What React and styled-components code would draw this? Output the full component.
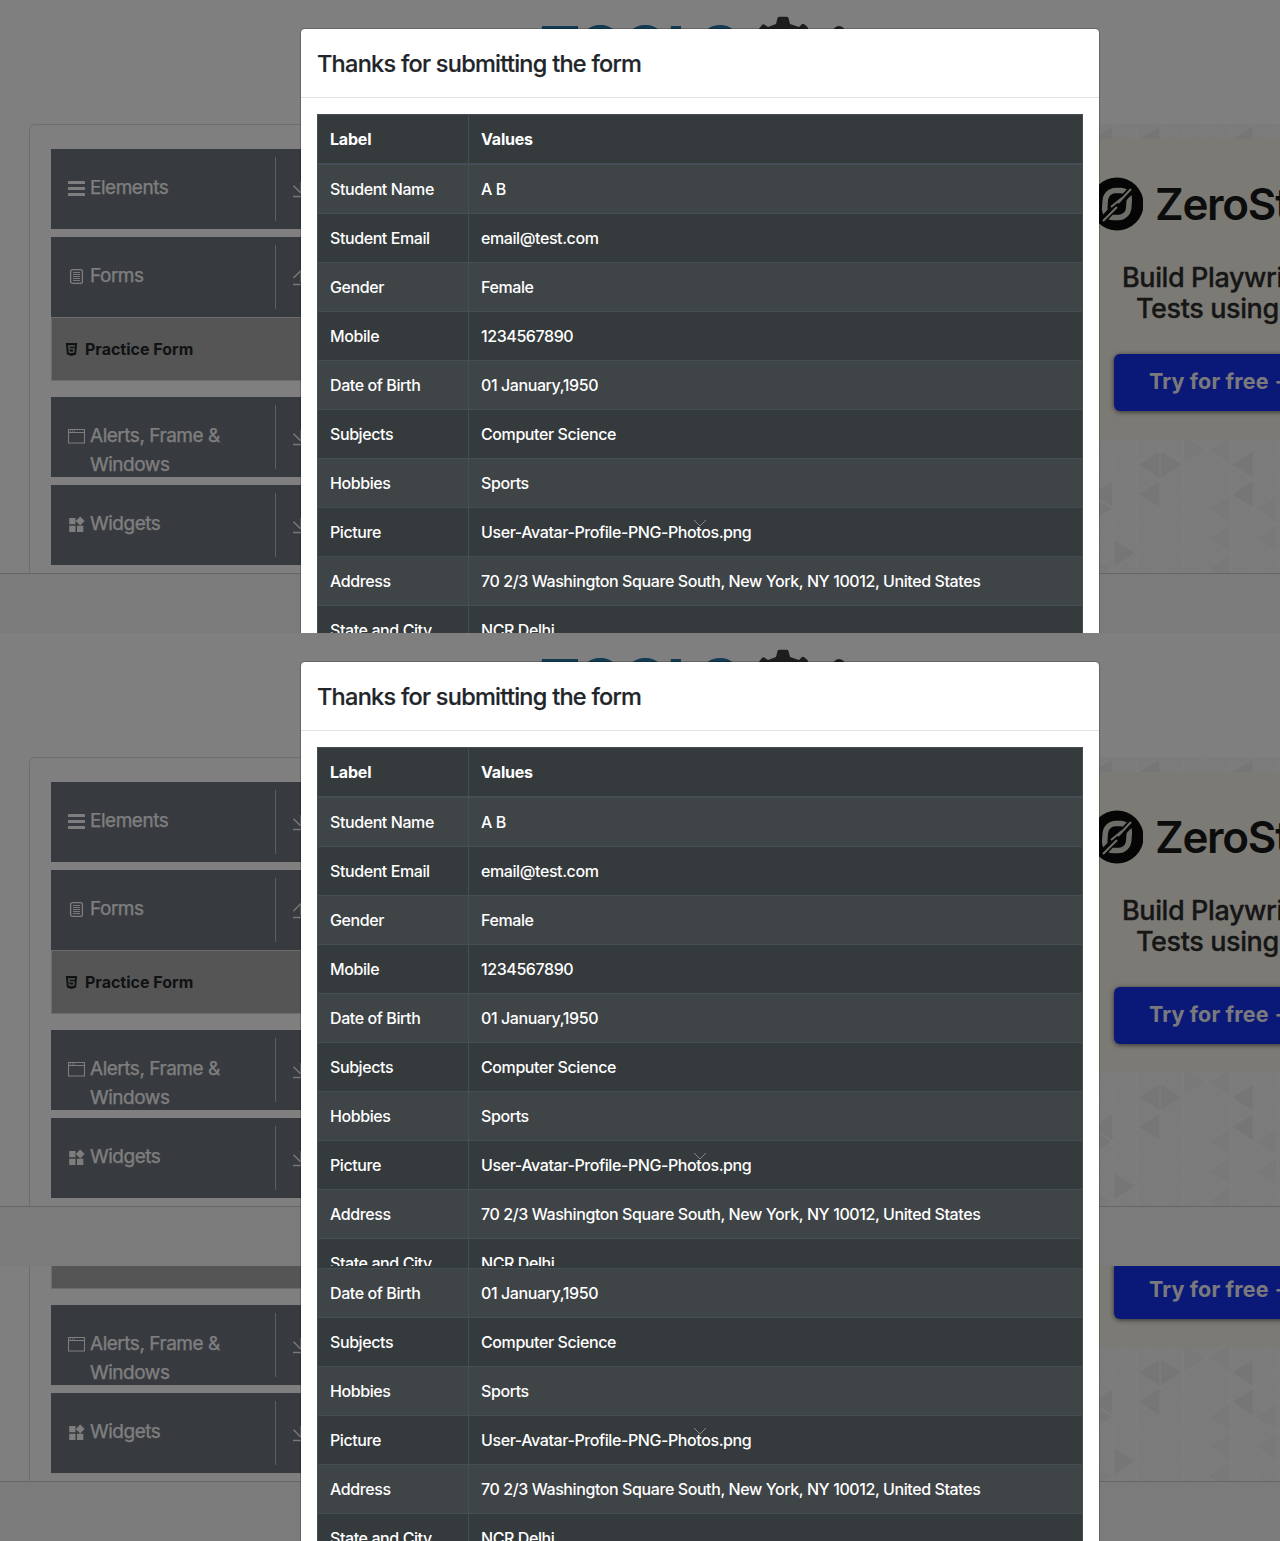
import React from "react";
import styled, { createGlobalStyle } from "styled-components";
import { FaHtml5 } from "react-icons/fa";

const Global = createGlobalStyle`
  * { box-sizing: border-box; }
  body {
    margin: 0;
    background: #808080;
    font-family: Inter, "Liberation Sans", sans-serif;
    font-size: 16px;
    line-height: 24px;
    color: #212529;
  }
`;

const Stack = styled.main`
  width: 1280px;
  display: flex;
  flex-direction: column;
`;

const Frame = styled.section`
  height: ${(p) => p.$height}px;
  display: flex;
  flex-direction: column;
  justify-content: flex-end;
  overflow: hidden;
`;

const Screen = styled.div`
  position: relative;
  flex: none;
  height: 633px;
  overflow: hidden;
  display: flex;
  flex-direction: column;
  background: #fff;
`;

const Header = styled.header`
  flex: none;
  height: 124px;
  padding: 16px 0 0 540px;
  display: flex;
  align-items: flex-start;
  overflow: hidden;
`;

const LogoWord = styled.span`
  width: 217px;
  margin-top: 5px;
  font-family: Inter, sans-serif;
  font-weight: 800;
  font-size: 59px;
  line-height: 54px;
  letter-spacing: -0.6px;
  white-space: nowrap;
  color: #2778a4;
`;

const Content = styled.div`
  flex: none;
  height: 449px;
  display: flex;
  justify-content: space-between;
  overflow: hidden;
`;

const Sidebar = styled.nav`
  width: 360px;
  height: 520px;
  margin-left: 29px;
  padding: 24px 21px;
  border: 1px solid #dcdcdc;
  border-radius: 6px;
`;

const Group = styled.div`
  height: 80px;
  margin-bottom: 8px;
  padding: 8px 0 8px 17px;
  display: flex;
  overflow: hidden;
  background: #6f757d;
  color: #fff;
`;

const GroupLabel = styled.div`
  width: 208px;
  height: 64px;
  padding-top: 16px;
  display: flex;
  gap: 5px;
  border-right: 1px solid #bfbfbf;
  font-size: 19px;
  line-height: 29px;
  letter-spacing: -0.48px;
  -webkit-text-stroke: 0.25px #fdfdfd;
  color: #fdfdfd;

  > svg { flex: none; width: 17px; height: 18px; margin-top: 6px; }
  > span { width: 150px; }
`;

const Toggle = styled.span`
  padding: 24px 0 0 16px;
  svg { display: block; }
`;

const SubItem = styled.div`
  height: 64px;
  margin: -8px 0 16px;
  padding: 0 12px;
  display: flex;
  align-items: center;
  gap: 6px;
  background: #aaa;
  border: 1px solid #d8d8da;
  font-size: 16px;
  font-weight: 700;
  letter-spacing: 0;
  color: #222528;
`;

const AdColumn = styled.aside`
  width: 190px;
  display: flex;
  flex-direction: column;
  padding-top: 15px;
  overflow: hidden;
  position: relative;
`;

const Pattern = styled.svg`
  position: absolute;
  left: 0;
  top: 0;
`;

const Ad = styled.div`
  position: relative;
  width: 300px;
  height: 300px;
  padding-top: 36px;
  background: #f8f4ea;
  color: #2c2c2c;
`;

const Brand = styled.div`
  height: 58px;
  display: flex;
  align-items: center;
  gap: 12px;
  font-size: 44px;
  font-weight: 600;
  letter-spacing: -1.3px;
  color: #181818;
  white-space: nowrap;
`;

const Slogan = styled.div`
  padding: ${(p) => p.$pad};
  font-size: 27px;
  line-height: 31px;
  font-weight: 500;
  letter-spacing: ${(p) => p.$track}px;
  -webkit-text-stroke: 0.3px #2c2c2c;
  white-space: nowrap;
`;

const AdButton = styled.div`
  width: 250px;
  height: 57px;
  margin: 30px 0 0 24px;
  padding-left: 35px;
  border-radius: 6px;
  background: #1430f0;
  box-shadow: 0 1px 5px rgba(0, 0, 0, 0.6);
  color: #f4f4fb;
  font-size: 21.5px;
  line-height: 54px;
  font-weight: 700;
  letter-spacing: 0.15px;
  white-space: nowrap;
`;

const Footer = styled.footer`
  flex: none;
  height: 60px;
  border-top: 1px solid #ccc;
  background: #f7f7f7;
`;

const Backdrop = styled.div`
  position: absolute;
  inset: 0;
  background: rgba(0, 0, 0, 0.5);
  padding: 28px 0 0 300px;
`;

const Dialog = styled.div`
  position: relative;
  width: 800px;
  height: 760px;
  background: #fff;
  background-clip: padding-box;
  border: 1px solid rgba(0, 0, 0, 0.2);
  border-radius: 5px;
`;

const DialogTitle = styled.h1`
  height: 69px;
  margin: 0;
  padding: 17px 16px;
  border-bottom: 1px solid #dee2e6;
  font-size: 23.5px;
  line-height: 36px;
  font-weight: 500;
  letter-spacing: -0.73px;
  -webkit-text-stroke: 0.2px #212529;
`;

const DialogBody = styled.div`
  padding: 16px;
`;

const Table = styled.table`
  width: 766px;
  table-layout: fixed;
  border-collapse: collapse;
  background: #353a3d;
  color: #fff;

  th, td {
    padding: 12px;
    border: 1px solid #454d55;
    text-align: left;
    white-space: nowrap;
    font-weight: 500;
    letter-spacing: -0.41px;
  }
  th { border-bottom-width: 2px; font-weight: 700; letter-spacing: -0.2px; }
  th:first-child { width: 151px; }
  tbody tr:nth-child(odd) { background: #3f4447; }
`;

const Chevron = styled.svg`
  position: absolute;
  left: 392px;
  top: 490px;
`;

const rows = [
  ["Student Name", "A B"],
  ["Student Email", "email@test.com"],
  ["Gender", "Female"],
  ["Mobile", "1234567890"],
  ["Date of Birth", "01 January,1950"],
  ["Subjects", "Computer Science"],
  ["Hobbies", "Sports"],
  ["Picture", "User-Avatar-Profile-PNG-Photos.png"],
  ["Address", "70 2/3 Washington Square South, New York, NY 10012, United States"],
  ["State and City", "NCR Delhi"],
];

const BarsIcon = () => (
  <svg viewBox="0 0 17 18" fill="currentColor">
    <rect y="2" width="17" height="3" rx=".6" />
    <rect y="8" width="17" height="3" rx=".6" />
    <rect y="14" width="17" height="3" rx=".6" />
  </svg>
);

const FormIcon = () => (
  <svg viewBox="0 0 17 18" fill="none" stroke="currentColor">
    <rect x="2.6" y="2.6" width="11.8" height="13.8" rx="2" strokeWidth="1.3" />
    <path d="M5 5.5h7M5 7.5h7M5 9.5h7M5 11.5h7M5 13.5h7" strokeWidth="0.9" />
  </svg>
);

const WindowIcon = () => (
  <svg viewBox="0 0 17 18" fill="none" stroke="currentColor" strokeWidth="1.1">
    <path d="M.5 2.5h16V16H.5zM.5 5.5h16" />
    <path d="M2 4h1M4 4h1M6 4h1" />
  </svg>
);

const WidgetsIcon = () => (
  <svg viewBox="0 0 17 18" fill="currentColor">
    <path d="M1.200 3h6.300v6.300H1.200zM1.200 10.700h6.300V17H1.200zM9 10.700h6.300V17H9zM12.200 1.600l4.400 4.400-4.400 4.400L7.800 6z" />
  </svg>
);

const Arrow = ({ up }) => (
  <svg width="18" height="18" viewBox="0 0 18 18" fill="none" stroke="#f0f0f0" strokeWidth="1.5">
    <path d={up ? "M1 15.500h16M9 13V1.500M1.500 9 9 1.500 16.500 9" : "M1 15.500h16M9 1v11M1.500 4.800 9 12.300l7.500-7.500"} />
  </svg>
);

const Gear = () => (
  <svg width="120" height="56" viewBox="757 16 120 56" fill="#3a3a3c">
    <path d="M776 24l1.500-6q.4-1.200 2-1.200h7q1.600 0 2 1.200l1.500 6 9 3 2.500-2.600q1.500-1.200 3 0l3 2.600 1.500 5v39h-52V31l3-3.500 2-2.600q1.500-1.200 3 0l3 2z" />
    <circle cx="839" cy="32" r="6" />
  </svg>
);

const BrandMark = () => (
  <svg width="53" height="54" viewBox="-27 -27 53 54">
    <circle r="26.5" fill="#0a0a0a" />
    <rect x="-12" y="-13.5" width="24" height="27" rx="9.5" fill="none" stroke="#dedbd0" strokeWidth="5.5" transform="skewX(-4)" />
    <path d="M-16 18 17-17" stroke="#0a0a0a" strokeWidth="7" />
    <path d="M-14 17 0 3M-6 3 5-6M1-1 14-15" stroke="#dedbd0" strokeWidth="2" />
  </svg>
);

const COL = 23.4;
const ROW = 29.55;
const left = (c, y) => `M${23.4 + c * COL} ${y}l${COL} ${-ROW / 2}v${ROW}z`;
const right = (c, y) => `M${23.4 + c * COL} ${y - ROW / 2}l${COL} ${ROW / 2}l${-COL} ${ROW / 2}z`;
const rowY = (n) => 0.7 + n * (ROW / 2);

const darkTiles = [
  left(-1, rowY(1)), left(1, rowY(1)), left(5, rowY(1)),
  left(1, rowY(23)), right(2, rowY(23)), left(5, rowY(23)),
  left(-1, rowY(25)), left(1, rowY(25)), left(5, rowY(25)), right(-1, rowY(26)), right(0, rowY(29)),
].join("");
const softTiles = [
  right(3, rowY(22)), left(4, rowY(22)), left(4, rowY(26)), left(6, rowY(26)),
  left(4, rowY(28)), left(6, rowY(28)), left(4, rowY(30)), right(-1, rowY(30)),
].join("");

const Triangles = ({ id }) => (
  <Pattern width="190" height="449">
    <defs>
      <pattern id={id} x="23.4" y="0.7" width={COL * 2} height={ROW} patternUnits="userSpaceOnUse">
        <path
          d={`M0 0V${ROW}M${COL} 0V${ROW}M${COL * 2} 0V${ROW}M0 0L${COL * 2} ${ROW}M0 ${ROW}L${COL * 2} 0`}
          stroke="#fafafa"
          strokeWidth="1.6"
          fill="none"
        />
      </pattern>
    </defs>
    <rect width="190" height="449" fill="#f7f7f7" />
    <path d={softTiles} fill="#f2f2f2" />
    <path d={darkTiles} fill="#ededed" />
    <rect width="190" height="449" fill={`url(#${id})`} />
  </Pattern>
);

const MenuGroup = ({ icon, label, open }) => (
  <Group>
    <GroupLabel>
      {icon}
      <span>{label}</span>
    </GroupLabel>
    <Toggle>
      <Arrow up={open} />
    </Toggle>
  </Group>
);

const FormScreen = ({ height, id }) => (
  <Frame $height={height}>
    <Screen>
      <Header>
        <LogoWord>TOOLS</LogoWord>
        <Gear />
      </Header>
      <Content>
        <Sidebar>
          <MenuGroup icon={<BarsIcon />} label="Elements" />
          <MenuGroup icon={<FormIcon />} label="Forms" open />
          <SubItem>
            <FaHtml5 size={15} />
            Practice Form
          </SubItem>
          <MenuGroup icon={<WindowIcon />} label="Alerts, Frame & Windows" />
          <MenuGroup icon={<WidgetsIcon />} label="Widgets" />
        </Sidebar>
        <AdColumn>
          <Triangles id={id} />
          <Ad>
            <Brand>
              <BrandMark />
              ZeroStep
            </Brand>
            <Slogan $pad="29px 0 0 32px" $track={-0.4}>Build Playwright</Slogan>
            <Slogan $pad="0 0 0 46px" $track={-0.4}>Tests using AI</Slogan>
            <AdButton>Try for free →</AdButton>
          </Ad>
        </AdColumn>
      </Content>
      <Footer />
      <Backdrop>
        <Dialog>
          <DialogTitle>Thanks for submitting the form</DialogTitle>
          <DialogBody>
            <Table>
              <thead>
                <tr>
                  <th>Label</th>
                  <th>Values</th>
                </tr>
              </thead>
              <tbody>
                {rows.map(([label, value]) => (
                  <tr key={label}>
                    <td>{label}</td>
                    <td>{value}</td>
                  </tr>
                ))}
              </tbody>
            </Table>
          </DialogBody>
          <Chevron width="14" height="8" viewBox="0 0 14 8" fill="none" stroke="#858789">
            <path d="M1 1l6 6 6-6" />
          </Chevron>
        </Dialog>
      </Backdrop>
    </Screen>
  </Frame>
);

export default function App() {
  return (
    <>
      <Global />
      <Stack>
        <FormScreen height={633} id="tiles-a" />
        <FormScreen height={633} id="tiles-b" />
        <FormScreen height={275} id="tiles-c" />
      </Stack>
    </>
  );
}
